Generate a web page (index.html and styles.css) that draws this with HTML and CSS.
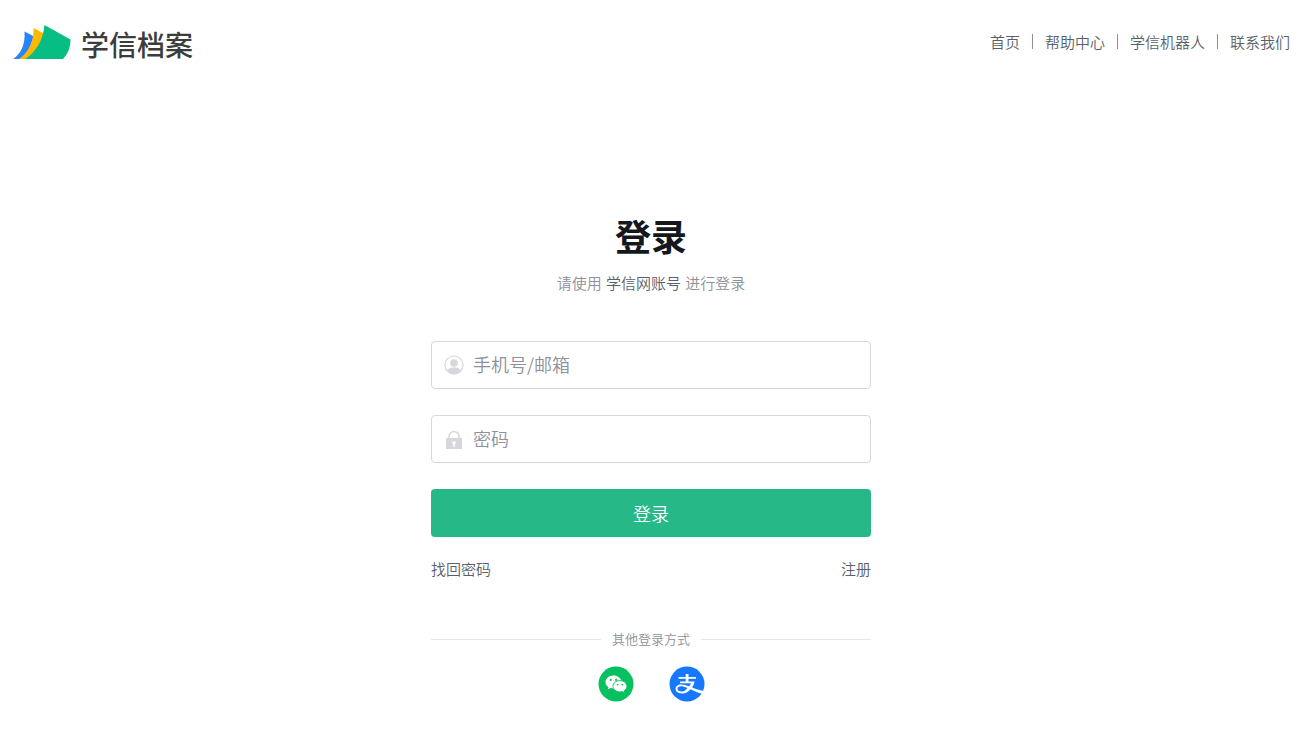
FILE: index.html
```html
<!DOCTYPE html>
<html lang="zh-CN">
<head>
<meta charset="utf-8">
<meta name="viewport" content="width=device-width, initial-scale=1">
<title>学信档案 登录</title>
<link rel="stylesheet" href="styles.css">
</head>
<body>
<header class="header">
  <a class="brand" href="#">
    <svg class="brand-mark" viewBox="0 0 58 36" width="58" height="36" aria-hidden="true">
      <path fill="#2684ff" d="M11.500 7.500L21 12.500L12 35H0C8 30 12.500 20 11.500 7.500Z"/>
      <path fill="#ffb800" d="M20.500 4L31 9.500L20 35H6C15 29 21 18 20.500 4Z"/>
      <path fill="#06bd84" d="M31.500 1L57.500 15.500C57.500 23 55 30 50 35H12C22 29 30 17 31.500 1Z"/>
    </svg>
    <span class="brand-name">学信档案</span>
  </a>
  <nav class="nav">
    <a href="#">首页</a>
    <a href="#">帮助中心</a>
    <a href="#">学信机器人</a>
    <a href="#">联系我们</a>
  </nav>
</header>
<main class="login">
  <h1 class="title">登录</h1>
  <p class="subtitle">请使用 <a href="#">学信网账号</a> 进行登录</p>
  <form class="form">
    <label class="field">
      <svg class="field-icon" viewBox="0 0 20 20" width="20" height="20" aria-hidden="true">
        <circle cx="10" cy="10" r="9" fill="none" stroke="#d5d7dc" stroke-width="1.200"/>
        <circle cx="10" cy="8" r="3.800" fill="#d5d7dc"/>
        <path fill="#d5d7dc" d="M3 15.500C4.500 13 7 12.200 10 12.200S15.500 13 17 15.500C13.500 20.500 6.500 20.500 3 15.500Z"/>
      </svg>
      <input type="text" placeholder="手机号/邮箱" aria-label="手机号/邮箱">
    </label>
    <label class="field">
      <svg class="field-icon" viewBox="0 0 20 20" width="20" height="20" aria-hidden="true">
        <path fill="none" stroke="#d5d7dc" stroke-width="1.500" d="M5 10V7.500a5 5 0 0 1 10 0V10"/>
        <path fill="#d5d7dc" fill-rule="evenodd" d="M2 9H18V20H2ZM10 12a2 2 0 0 0-.8 3.700V18h1.600v-2.300A2 2 0 0 0 10 12Z"/>
      </svg>
      <input type="password" placeholder="密码" aria-label="密码">
    </label>
    <button class="submit" type="button">登录</button>
  </form>
  <div class="links">
    <a href="#">找回密码</a>
    <a href="#">注册</a>
  </div>
  <div class="divider">其他登录方式</div>
  <div class="social">
    <a href="#" aria-label="微信登录">
      <svg viewBox="0 0 36 36" width="36" height="36" aria-hidden="true">
        <circle cx="18" cy="18" r="17.500" fill="#07c160"/>
        <path fill="#fff" d="M15.500 9.500C11 9.500 7.500 12.400 7.500 16.100C7.500 18.200 8.600 20 10.400 21.200L9.700 23.400L12.400 22.100C13.400 22.400 14.500 22.600 15.600 22.600C22 22.600 23.600 18.500 23.400 15.200C22.900 12 19.600 9.500 15.500 9.500Z"/>
        <path fill="#fff" stroke="#07c160" stroke-width=".9" d="M21.900 14.600C18 14.600 15 17.100 15 20.200C15 23.400 18 25.900 21.900 25.900C22.700 25.900 23.500 25.800 24.200 25.600L26.600 26.900L26 24.800C27.800 23.700 28.900 22.100 28.900 20.200C28.900 17.100 25.800 14.600 21.900 14.600Z"/>
        <g fill="#07c160"><circle cx="12.800" cy="13.900" r="1.100"/><circle cx="18.200" cy="13.900" r="1.100"/><circle cx="19.600" cy="18.600" r=".9"/><circle cx="24.200" cy="18.600" r=".9"/></g>
      </svg>
    </a>
    <a href="#" aria-label="支付宝登录">
      <svg viewBox="0 0 36 36" width="36" height="36" aria-hidden="true">
        <circle cx="18" cy="18" r="17.500" fill="#1677ff"/>
        <path fill="#fff" d="M16.700 8H19.500V11H27V12.800H19.500V15.500H25.600C25.100 17.700 24.200 19.700 23.100 21.400C26.300 22.700 30.300 24 35 25L33.600 28C28.900 26.500 24.900 24.800 21.500 23.200C19.200 25.900 16.500 27.500 12.900 27.500C9.100 27.500 6.600 25.500 6.600 22.800C6.600 20.200 8.800 18.400 12.100 18.400C14.800 18.400 17.400 19.200 20.200 20.300C21 19.300 21.600 18.300 22 17.200H11V15.500H16.700V12.800H9.500V11H16.700ZM18.400 21.900C15.900 20.800 13.900 20.200 12 20.200C9.800 20.200 8.500 21.200 8.500 22.800C8.500 24.500 10 25.600 12.500 25.600C14.800 25.600 16.700 24.200 18.400 21.900Z"/>
      </svg>
    </a>
  </div>
</main>
</body>
</html>
```
FILE: styles.css
```css
* {
  box-sizing: border-box;
}

body {
  margin: 0;
  padding-right: 3px;
  background: #fff;
  color: #5a5f6b;
  font-family: "Noto Sans CJK SC", sans-serif;
  font-size: 15px;
  font-weight: 350;
  line-height: 24px;
}

a {
  color: inherit;
  text-decoration: none;
}

.header {
  display: flex;
  align-items: center;
  justify-content: space-between;
  height: 84px;
  padding: 0 12px 0 13px;
}

.brand {
  display: flex;
  align-items: center;
  gap: 10px;
  color: #3c3c3c;
}

.brand-mark {
  display: block;
}

.brand-name {
  font-size: 28px;
  font-weight: 500;
  line-height: 36px;
  padding-top: 4px;
}

.nav {
  display: flex;
  align-items: center;
  padding-bottom: 2px;
}

.nav a {
  line-height: 15px;
}

.nav a + a {
  margin-left: 12px;
  padding-left: 12px;
  border-left: 1px solid #8d919b;
}

.login {
  width: 100%;
  max-width: 440px;
  margin: 0 auto;
  padding: 127px 0 36px;
}

.title {
  margin: 0;
  color: #14171c;
  font-size: 36px;
  font-weight: 700;
  line-height: 48px;
  text-align: center;
}

.subtitle {
  margin: 12px 0 0;
  color: #8d919b;
  text-align: center;
}

.subtitle a {
  margin: 0 1px;
  color: #5a5f6b;
}

.form {
  display: grid;
  gap: 26px;
  margin-top: 46px;
}

.field {
  display: flex;
  align-items: center;
  gap: 9px;
  height: 48px;
  padding: 0 12px;
  border: 1px solid #d5d7dc;
  border-radius: 4px;
}

.field-icon {
  flex: none;
}

.field input {
  flex: 1;
  min-width: 0;
  height: 44px;
  padding: 0 0 3px;
  border: 0;
  outline: 0;
  background: none;
  color: #14171c;
  font: inherit;
  font-size: 18px;
}

.field input::placeholder {
  color: #8d919b;
  opacity: 1;
}

.submit {
  height: 48px;
  padding: 0;
  border: 0;
  border-radius: 4px;
  background: #26b887;
  color: #fff;
  font: inherit;
  font-size: 18px;
}

.links {
  display: flex;
  justify-content: space-between;
  margin-top: 20px;
}

.divider {
  display: flex;
  align-items: center;
  gap: 11px;
  margin-top: 46px;
  color: #8d919b;
  font-size: 13px;
}

.divider::before,
.divider::after {
  content: "";
  flex: 1;
  height: 1px;
  background: #e6e7ea;
}

.social {
  display: flex;
  justify-content: center;
  gap: 35px;
  margin-top: 15px;
}

.social svg {
  display: block;
}
```
